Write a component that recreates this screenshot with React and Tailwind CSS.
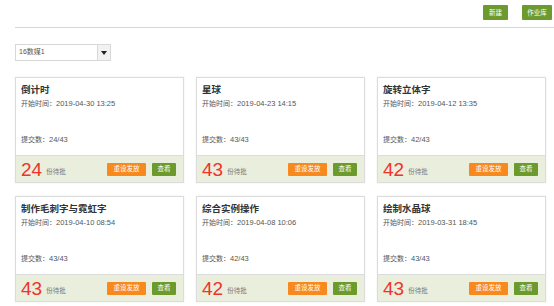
import React from "react";

const cards = [
  { title: "倒计时", time: "2019-04-30 13:25", sub: "24/43", pending: 24 },
  { title: "星球", time: "2019-04-23 14:15", sub: "43/43", pending: 43 },
  { title: "旋转立体字", time: "2019-04-12 13:35", sub: "42/43", pending: 42 },
  { title: "制作毛刺字与霓虹字", time: "2019-04-10 08:54", sub: "43/43", pending: 43 },
  { title: "综合实例操作", time: "2019-04-08 10:06", sub: "42/43", pending: 42 },
  { title: "绘制水晶球", time: "2019-03-31 18:45", sub: "43/43", pending: 43 },
];

function Card({ c }) {
  return (
    <div className="flex h-[106px] flex-col border border-[#dcdcdc] bg-white shadow-[0_0_2px_rgba(0,0,0,0.08)]">
      <div className="flex h-[77px] flex-col px-[5px] pt-[5px]">
        <div className="text-[9.5px] font-bold leading-[14px] text-[#333]">{c.title}</div>
        <div className="mt-[1px] text-[7px] leading-[11px] text-[#555]">
          开始时间：<span className="text-[7.5px]">{c.time}</span>
        </div>
        <div className="mt-auto mb-[10px] text-[7px] leading-[11px] text-[#555]">
          提交数：<span className="text-[7.5px]">{c.sub}</span>
        </div>
      </div>
      <div className="flex flex-1 items-center border-t border-[#dcdcdc] bg-[#e9eedd] pl-[5px] pr-[7px]">
        <span className="text-[19px] font-normal leading-none text-[#f2322b]" style={{ fontFamily: '"Liberation Sans", Arial, sans-serif' }}>
          {c.pending}
        </span>
        <span className="ml-[4px] mt-[5px] text-[6.5px] text-[#777]">份待批</span>
        <div className="ml-auto flex gap-[6px]">
          <button className="flex h-[13px] w-[39px] items-center justify-center rounded-[1px] bg-[#f7891e] text-[6.5px] text-white">
            重设发放
          </button>
          <button className="flex h-[13px] w-[24px] items-center justify-center rounded-[1px] bg-[#6c9a2c] text-[6.5px] text-white">
            查看
          </button>
        </div>
      </div>
    </div>
  );
}

export default function App() {
  return (
    <div
      className="h-[306px] w-[554px] overflow-hidden bg-white"
      style={{ fontFamily: '"Liberation Sans", "Noto Sans CJK SC", sans-serif' }}
    >
      <div className="flex h-[27px] justify-end gap-[14px] pt-[5px] pr-[2px]">
        <button className="flex h-[15px] w-[25px] items-center justify-center rounded-[1px] bg-[#6c9a2c] text-[6.5px] text-white">
          新建
        </button>
        <button className="flex h-[15px] w-[30px] items-center justify-center rounded-[1px] bg-[#6c9a2c] text-[6.5px] text-white">
          作业库
        </button>
      </div>
      <div className="ml-[15px] h-[1px] bg-[#d6d6d6]" />
      <div className="pl-[15px] pt-[16px]">
        <div className="flex h-[17px] w-[96px] border border-[#d8d8d8]">
          <div className="flex flex-1 items-center pl-[3px] text-[7px] text-[#555]">16数媒1</div>
          <div className="flex w-[13px] items-center justify-center border-l border-[#d8d8d8] bg-[#f2f2f2]">
            <svg width="6" height="4" viewBox="0 0 6 4">
              <path d="M0 0H6L3 4Z" fill="#222" />
            </svg>
          </div>
        </div>
      </div>
      <div className="grid grid-cols-[169px_169px_169px] gap-x-[12px] gap-y-[13px] pl-[15px] pt-[16px]">
        {cards.map((c, i) => (
          <Card key={i} c={c} />
        ))}
      </div>
    </div>
  );
}
